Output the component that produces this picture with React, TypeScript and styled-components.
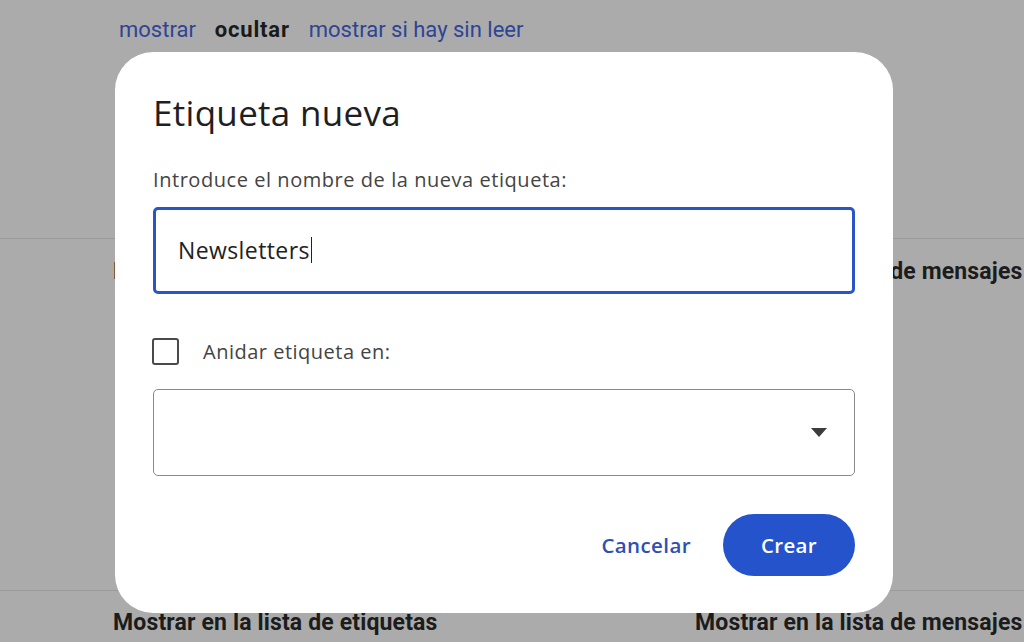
import React from 'react';
import styled, { createGlobalStyle } from 'styled-components';

const GlobalStyle = createGlobalStyle`
  html, body {
    margin: 0;
    padding: 0;
    width: 1024px;
    height: 642px;
    overflow: hidden;
    background: #ababab;
  }
  * { box-sizing: border-box; }
`;

const Page = styled.div`
  position: relative;
  width: 1024px;
  height: 642px;
  background: #ababab;
  font-family: 'Liberation Sans', Arial, sans-serif;
  color: #1f1f1f;
`;

const LinkRow = styled.div`
  display: flex;
  gap: 19px;
  padding: 16px 0 0 119px;
  height: 238px;
  font-family: 'Roboto', 'Liberation Sans', sans-serif;
  font-size: 22px;
`;

const Option = styled.span<{ $active?: boolean }>`
  color: ${(p) => (p.$active ? '#1a1a1a' : '#2f4493')};
  font-weight: ${(p) => (p.$active ? 700 : 400)};
  letter-spacing: ${(p) => (p.$active ? '0.8px' : '0')};
  line-height: 28px;
`;

const Section = styled.div<{ $height: number }>`
  border-top: 1px solid #9a9a9a;
  height: ${(p) => p.$height}px;
  display: grid;
  grid-template-columns: 582px 1fr;
  padding-left: 113px;
  align-items: start;
`;

const Heading = styled.div<{ $top: number }>`
  padding-top: ${(p) => p.$top}px;
  font-family: 'Roboto', 'Liberation Sans', sans-serif;
  font-weight: 700;
  font-size: 23px;
  letter-spacing: 0.15px;
  line-height: 28px;
  white-space: nowrap;
  color: #1c1c1c;
`;

const Dialog = styled.div`
  position: absolute;
  left: 115px;
  top: 52px;
  width: 778px;
  height: 561px;
  background: #fff;
  border-radius: 38px;
  padding: 38px 38px 0 38px;
  display: flex;
  flex-direction: column;
  font-family: 'Open Sans', 'Liberation Sans', sans-serif;
`;

const Title = styled.h1`
  margin: 0;
  font-size: 35px;
  font-weight: 400;
  color: #1f1f1f;
  line-height: 46px;
  letter-spacing: 0.3px;
`;

const Label = styled.div`
  margin-top: 32px;
  font-size: 20px;
  letter-spacing: 0.55px;
  color: #444;
  line-height: 24px;
`;

const TextField = styled.div`
  margin-top: 15px;
  height: 87px;
  border: 3px solid #2a55c6;
  border-radius: 5px;
  display: flex;
  align-items: center;
  padding: 0 0 1px 22px;
  font-size: 23px;
  letter-spacing: 0.4px;
  color: #222;
`;

const Caret = styled.span`
  display: inline-block;
  width: 1.5px;
  height: 26px;
  background: #222;
  margin-left: 1px;
`;

const CheckRow = styled.label`
  margin-top: 43px;
  display: flex;
  align-items: center;
  gap: 24px;
  font-size: 20px;
  letter-spacing: 0.5px;
  color: #444;
  height: 28px;
`;

const Box = styled.span`
  width: 27px;
  height: 27px;
  border: 2.5px solid #4a4a4a;
  border-radius: 3px;
  margin-left: -1px;
`;

const Select = styled.div`
  margin-top: 24px;
  height: 87px;
  border: 1.5px solid #8a8a8a;
  border-radius: 5px;
  display: flex;
  align-items: center;
  justify-content: flex-end;
  padding-right: 27px;
`;

const Actions = styled.div`
  margin-top: 38px;
  display: flex;
  justify-content: flex-end;
  align-items: center;
  gap: 32px;
`;

const TextButton = styled.button`
  border: none;
  background: none;
  padding: 0;
  font-family: inherit;
  font-size: 20.5px;
  font-weight: 600;
  letter-spacing: 0.4px;
  color: #2c50b5;
`;

const FilledButton = styled.button`
  border: none;
  height: 62px;
  width: 132px;
  border-radius: 31px;
  background: #2553cc;
  color: #fff;
  font-family: inherit;
  font-size: 20.5px;
  font-weight: 600;
  letter-spacing: 0.3px;
`;

export default function App() {
  return (
    <Page>
      <GlobalStyle />
      <LinkRow>
        <Option>mostrar</Option>
        <Option $active>ocultar</Option>
        <Option>mostrar si hay sin leer</Option>
      </LinkRow>
      <Section $height={352}>
        <Heading $top={19}>Mostrar en la lista de etiquetas</Heading>
        <Heading $top={19}>Mostrar en la lista de mensajes</Heading>
      </Section>
      <Section $height={52}>
        <Heading $top={18}>Mostrar en la lista de etiquetas</Heading>
        <Heading $top={18}>Mostrar en la lista de mensajes</Heading>
      </Section>

      <Dialog>
        <Title>Etiqueta nueva</Title>
        <Label>Introduce el nombre de la nueva etiqueta:</Label>
        <TextField>
          Newsletters
          <Caret />
        </TextField>
        <CheckRow>
          <Box />
          Anidar etiqueta en:
        </CheckRow>
        <Select>
          <svg width="16" height="9" viewBox="0 0 16 9">
            <path d="M0 0h16L8 9z" fill="#3c3c3c" />
          </svg>
        </Select>
        <Actions>
          <TextButton>Cancelar</TextButton>
          <FilledButton>Crear</FilledButton>
        </Actions>
      </Dialog>
    </Page>
  );
}
